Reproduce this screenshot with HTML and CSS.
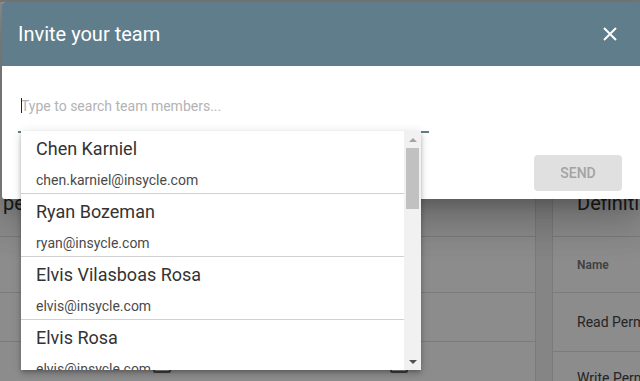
FILE: index.html
```html
<!DOCTYPE html>
<html lang="en">
<head>
<meta charset="utf-8">
<title>Invite your team</title>
<link rel="stylesheet" href="styles.css">
</head>
<body>
<div class="page">
  <section class="card card-left">
    <div class="card-head"><h2 class="card-title">permission groups</h2></div>
    <div class="row row-a"></div>
    <div class="row row-b"></div>
    <div class="row row-c">
      <span class="checkbox cb-1"></span>
      <span class="checkbox cb-2"></span>
    </div>
  </section>
  <section class="card card-right">
    <div class="card-head"><h2 class="card-title">Definitions</h2></div>
    <div class="row row-a"><span class="col-head">Name</span></div>
    <div class="row row-d"><span class="cell">Read Permission</span></div>
    <div class="row row-e"><span class="cell">Write Permission</span></div>
  </section>
</div>

<div class="backdrop"></div>

<div class="dialog">
  <header class="dialog-head">
    <h1 class="dialog-title">Invite your team</h1>
    <button class="close" aria-label="Close">
      <svg width="14" height="14" viewBox="0 0 14 14"><path d="M1 1L13 13M13 1L1 13" stroke="#fff" stroke-width="2" fill="none"/></svg>
    </button>
  </header>
  <div class="dialog-body">
    <div class="field">
      <span class="caret"></span>
      <input class="search" type="text" placeholder="Type to search team members...">
    </div>
    <div class="actions">
      <button class="send" disabled>SEND</button>
    </div>
  </div>
</div>

<div class="dropdown">
  <ul class="options">
    <li class="option"><span class="opt-name">Chen Karniel</span><span class="opt-mail">chen.karniel@insycle.com</span></li>
    <li class="option"><span class="opt-name">Ryan Bozeman</span><span class="opt-mail">ryan@insycle.com</span></li>
    <li class="option"><span class="opt-name">Elvis Vilasboas Rosa</span><span class="opt-mail">elvis@insycle.com</span></li>
    <li class="option"><span class="opt-name">Elvis Rosa</span><span class="opt-mail">elvis@insycle.com</span></li>
  </ul>
  <div class="scrollbar">
    <span class="arrow arrow-up"></span>
    <span class="thumb"></span>
    <span class="track-fill"></span>
    <span class="arrow arrow-down"></span>
  </div>
</div>
</body>
</html>
```

FILE: styles.css
```css
html, body {
  margin: 0;
  padding: 0;
  width: 640px;
  height: 381px;
  overflow: hidden;
  font-family: Roboto, "Liberation Sans", Arial, sans-serif;
  background: #f2f2f2;
}

.page {
  display: flex;
  gap: 16px;
  border-top: 2px solid #dcdcdc;
  height: 379px;
  width: 640px;
  overflow: hidden;
}

.card {
  background: #fff;
  display: flex;
  flex-direction: column;
  overflow: hidden;
}
.card > * { flex: none; }
.card-left {
  width: 535px;
  flex: none;
  border-right: 1px solid #e0e0e0;
}
.card-right {
  flex: 1;
  min-width: 0;
  border-left: 1px solid #e0e0e0;
}

.card-head {
  padding: 187px 0 19px 0;
  border-bottom: 1px solid #e0e0e0;
}
.card-left .card-head { padding-left: 3px; }
.card-right .card-head { padding-left: 24px; }

.card-title {
  margin: 0;
  font-size: 20px;
  line-height: 28px;
  font-weight: 400;
  color: #333;
  white-space: nowrap;
}

.row {
  display: flex;
  align-items: center;
  border-bottom: 1px solid #e0e0e0;
  padding-left: 24px;
  white-space: nowrap;
}
.row-a { height: 55px; }
.row-b { height: 48px; }
.row-c { height: 60px; position: relative; border-bottom: none; }
.row-d { height: 58px; }
.row-e { height: 52px; border-bottom: none; }

.col-head {
  font-size: 12px;
  font-weight: 700;
  color: rgba(0,0,0,.54);
}
.cell {
  font-size: 14px;
  color: #444;
}

.checkbox {
  position: absolute;
  top: 13px;
  width: 14px;
  height: 14px;
  border: 2px solid #6e6e6e;
  border-radius: 2px;
}
.cb-1 { left: 153px; }
.cb-2 { left: 390px; }

.backdrop {
  position: absolute;
  inset: 0;
  background: rgba(0,0,0,.45);
}

.dialog {
  position: absolute;
  left: 2px;
  top: 2px;
  width: 640px;
  background: #fff;
  border-radius: 3px 0 0 3px;
  box-shadow: 0 11px 15px -7px rgba(0,0,0,.2), 0 24px 38px 3px rgba(0,0,0,.14), 0 9px 46px 8px rgba(0,0,0,.12);
  overflow: hidden;
}

.dialog-head {
  height: 64px;
  background: #607d8b;
  display: flex;
  align-items: center;
  justify-content: space-between;
  padding: 0 25px 0 16px;
}
.dialog-title {
  margin: 0;
  font-size: 20px;
  font-weight: 400;
  color: #fff;
  line-height: 28px;
}
.close {
  border: none;
  background: none;
  padding: 0;
  width: 14px;
  height: 14px;
  display: flex;
}

.dialog-body {
  padding: 30px 20px 8px 16px;
}

.field {
  position: relative;
  width: 411px;
  padding-bottom: 15px;
  border-bottom: 2px solid #607d8b;
}
.search {
  display: block;
  width: 100%;
  box-sizing: border-box;
  border: none;
  outline: none;
  padding: 0 0 0 3px;
  margin: 0;
  height: 20px;
  font-family: Roboto, "Liberation Sans", Arial, sans-serif;
  font-size: 14px;
  line-height: 20px;
  color: #333;
  background: transparent;
}
.search::placeholder { color: #b3b3b3; }
.caret {
  position: absolute;
  left: 3px;
  top: 2px;
  width: 1px;
  height: 15px;
  background: #222;
}

.actions {
  display: flex;
  justify-content: flex-end;
  margin-top: 22px;
}
.send {
  width: 88px;
  height: 36px;
  border: none;
  border-radius: 4px;
  background: #e0e0e0;
  color: #a3a3a3;
  font-family: Roboto, "Liberation Sans", Arial, sans-serif;
  font-size: 14px;
  font-weight: 500;
  padding: 0;
}

.dropdown {
  position: absolute;
  left: 21px;
  top: 131px;
  width: 400px;
  height: 239px;
  background: #fff;
  display: flex;
  overflow: hidden;
  box-shadow: 0 2px 4px -1px rgba(0,0,0,.2), 0 4px 5px 0 rgba(0,0,0,.14), 0 1px 10px 0 rgba(0,0,0,.12);
}

.options {
  list-style: none;
  margin: 0;
  padding: 0;
  flex: 1;
}
.option {
  display: flex;
  flex-direction: column;
  height: 63px;
  padding: 6px 15px 0 15px;
  box-sizing: border-box;
  border-bottom: 1px solid #d0d0d0;
}
.opt-name {
  font-size: 18px;
  line-height: 24px;
  color: #333;
}
.opt-mail {
  margin-top: 9px;
  font-size: 14px;
  line-height: 20px;
  color: #4a4a4a;
}

.scrollbar {
  width: 17px;
  background: #f1f1f1;
  display: flex;
  flex-direction: column;
  align-items: center;
}
.arrow {
  width: 17px;
  height: 17px;
  flex: none;
  position: relative;
}
.arrow::after {
  content: "";
  position: absolute;
  left: 5px;
  width: 0;
  height: 0;
  border-left: 4px solid transparent;
  border-right: 4px solid transparent;
}
.arrow-up::after { top: 7px; border-bottom: 4px solid #a3a3a3; }
.arrow-down::after { top: 7px; border-top: 4px solid #505050; }
.thumb {
  width: 13px;
  height: 61px;
  background: #c1c1c1;
  flex: none;
}
.track-fill { flex: 1; }
```
